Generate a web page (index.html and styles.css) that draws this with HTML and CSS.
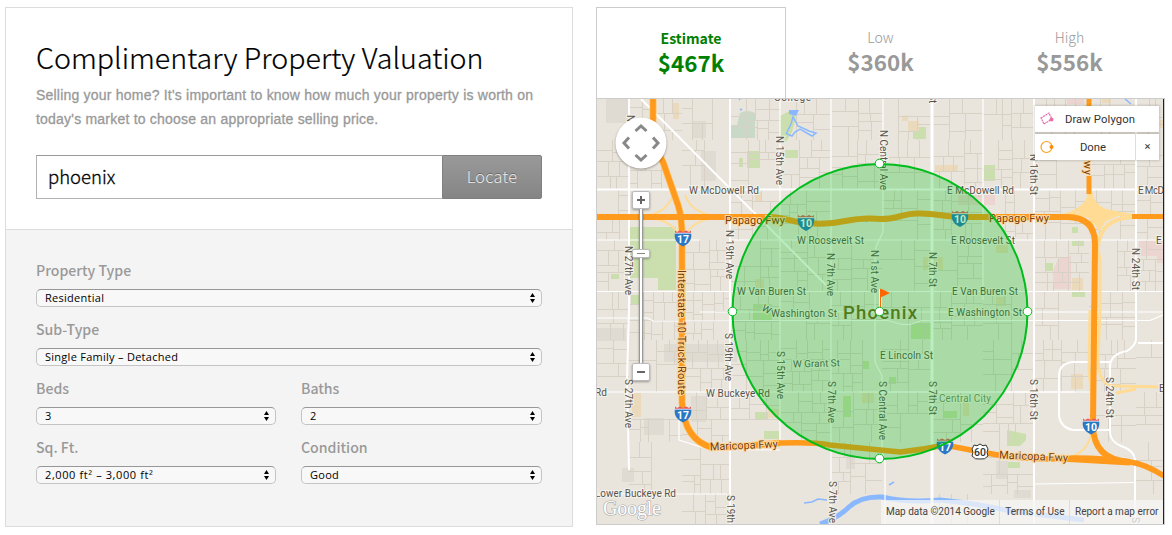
FILE: index.html
```html
<!DOCTYPE html>
<html lang="en">
<head>
    <meta charset="UTF-8">
    <meta name="viewport" content="width=device-width, initial-scale=1.0">
    <title>Complimentary Property Valuation</title>
    <link rel="stylesheet" href="styles.css">
</head>
<body>
    <div class="container">
        <form class="panel" id="valuationForm">
            <div class="panel-top">
                <h1>Complimentary Property Valuation</h1>
                <p class="intro">Selling your home? It's important to know how much your property is worth on<br>today's market to choose an appropriate selling price.</p>
                <div class="search">
                    <input type="text" id="location" name="location" value="phoenix">
                    <button type="submit">Locate</button>
                </div>
            </div>
            <div class="panel-fields">
                <div class="field wide">
                    <label for="type">Property Type</label>
                    <div class="select">
                        <select id="type" name="type"><option>Residential</option></select>
                        <svg width="5" height="10" viewBox="0 0 5 10"><path d="M2.5 0L5 4H0zM0 6h5L2.5 10z"/></svg>
                    </div>
                </div>
                <div class="field wide">
                    <label for="subtype">Sub-Type</label>
                    <div class="select">
                        <select id="subtype" name="subtype"><option>Single Family – Detached</option></select>
                        <svg width="5" height="10" viewBox="0 0 5 10"><path d="M2.5 0L5 4H0zM0 6h5L2.5 10z"/></svg>
                    </div>
                </div>
                <div class="field">
                    <label for="beds">Beds</label>
                    <div class="select">
                        <select id="beds" name="beds"><option>3</option></select>
                        <svg width="5" height="10" viewBox="0 0 5 10"><path d="M2.5 0L5 4H0zM0 6h5L2.5 10z"/></svg>
                    </div>
                </div>
                <div class="field">
                    <label for="baths">Baths</label>
                    <div class="select">
                        <select id="baths" name="baths"><option>2</option></select>
                        <svg width="5" height="10" viewBox="0 0 5 10"><path d="M2.5 0L5 4H0zM0 6h5L2.5 10z"/></svg>
                    </div>
                </div>
                <div class="field">
                    <label for="sqft">Sq. Ft.</label>
                    <div class="select">
                        <select id="sqft" name="sqft" class="sqft"><option>2,000 ft² – 3,000 ft²</option></select>
                        <svg width="5" height="10" viewBox="0 0 5 10"><path d="M2.5 0L5 4H0zM0 6h5L2.5 10z"/></svg>
                    </div>
                </div>
                <div class="field">
                    <label for="condition">Condition</label>
                    <div class="select">
                        <select id="condition" name="condition"><option>Good</option></select>
                        <svg width="5" height="10" viewBox="0 0 5 10"><path d="M2.5 0L5 4H0zM0 6h5L2.5 10z"/></svg>
                    </div>
                </div>
            </div>
        </form>

        <div class="results">
            <div class="tabs">
                <div class="tab active"><span>Estimate</span><b>$467k</b></div>
                <div class="tab"><span>Low</span><b>$360k</b></div>
                <div class="tab"><span>High</span><b>$556k</b></div>
            </div>
            <div class="map">
                <svg class="map-canvas" width="567" height="425" viewBox="597 99 567 425">
                    <defs>
                        <g id="interstate">
                            <path d="M-8-5C-9-1-8 5 0 8.500 8 5 9-1 8-5z" fill="#2a78c4"/>
                            <path d="M-8-7.500l2 1.500 3-1.500 3 1.500 3-1.500 3 1.500 2-1.500v2.500H-8z" fill="#e0575b"/>
                            <path d="M-8-4.800H8" stroke="#fff" stroke-width=".8"/>
                        </g>
                    </defs>
                    <rect x="597" y="99" width="567" height="425" fill="#e9e5dc"/>

                    <!-- built-up areas -->
                    <g fill="#dfdad2">
                        <path d="M606 99h22v24h-22zM692 121h14v17h-14zM701 151h15v30h-15zM597 328h29v13H597zM664 344h73v18h-73zM691 396h15v26h-15zM644 418h20v17h-20zM846 455h9v14h-9zM996 461h12v18h-12zM1014 490h17v8h-17zM622 468h12v14h-12z"/>
                    </g>
                    <!-- parks, schools, hospitals -->
                    <path fill="#cbdfae" d="M629 227h47v63h-18v-12h-29zM739 158h4v9h-4zM747 151h13v17h-13zM611 274h8v5h-8zM631 295h8v9h-8zM913 127h13v12h-13zM984 165h11v16h-11zM753 304h19v17h-19zM755 412h13v7h-13zM764 431h15v8h-15zM780 116l11-6 5 8-4 14-6 10h-6zM1072 227h6v6h-6zM1072 241h12v5h-12zM1046 263h7v8h-7zM1072 292h13v5h-13zM1007 430l19 4v6l-6 6h-13zM1008 462h12v6h-12zM843 396h8v21h-8zM862 361h7v8h-7zM889 377h7v7h-7zM911 323h20v16h-20zM944 411h13v7h-13zM785 150h13v8h-13z"/>
                    <path fill="#c8dac7" d="M740 113q7-4 15 0v25h-24v-13h6z"/>
                    <path fill="#ebd9bb" d="M673 103h6v16h-6zM632 393h9v24h-9zM768 409h11v9h-11zM755 192h6v9h-6zM902 116v5h6v10h11v-10h-11v-6zM935 165h23v7h-23zM1071 374h12v15h-12zM1072 278h11v12h-11zM923 257h20v13h-20zM862 391h12v12h-12zM963 400h6v16h-6zM996 245h12v8h-12zM996 297h10v9h-10zM1102 99h9v4h-9zM1160 120h4v8h-4zM755 279h9v9h-9z"/>
                    <path fill="#ecd4d0" d="M1067 99h17v5h-17zM958 195h37v10h-37zM1053 271l5-12 13-3v33h-18zM1139 241h25v22h-7v-7h-18z"/>

                    <g id="streets" fill="none" stroke="#d7d1c6" stroke-width="1"></g>

                    <!-- canal, pond and river -->
                    <g fill="none" stroke="#8ab8ff">
                        <path d="M786 134l5-10 2-7 5 9 11 5 7 2-4 3-12-7-5 3-3 4-5-2" stroke-width="1.500"/>
                        <path d="M789 110h10l-3 6-7-2z" fill="#8ab8ff" stroke="none"/>
                        <path d="M804 503l8-1 6-3 9 1M739 99l1 1M740 110l2-1M1124 98l7 6M889 485l5-3M866 222l3-3" stroke-width="1.500"/>
                        <path d="M820 524q18-6 29-17 12-11 33-10 25 6 58 3 40 4 70 11 40 5 74 9" stroke-width="5"/>
                    </g>

                    <!-- minor arterials -->
                    <g fill="none" stroke="#fff" stroke-width="1.200">
                        <path d="M597 291.500H1164M597 240H700M730 240H1164M597 392H1090M700 312H1164M597 318h50l6 3h80M730 320.500H888l14 4h8l12-4H1150l14-6M597 494h130M780 99V440M983 99V300M831 99V524M1035 484l100-1.500"/>
                        <path d="M883 99V232l-7 15 -1 10V362l7 14V450l3 12V524M860 392h110M970 392h105"/>
                        <path d="M679 410v30l28 9 73 1"/>
                    </g>
                    <!-- main avenues -->
                    <g fill="none" stroke="#fff" stroke-width="2">
                        <path d="M629 99V310l-2 70 2 90M730 99V524M1034 99V524M597 189.500H1164M641 99l16 16L828 287"/>
                        <path d="M932 99V524" stroke-width="3"/>
                        <path d="M1110 362H1072q-13 2-13 14V416q2 12 14 14h37"/>
                        <path d="M1136 99V340q-1 6-9 11-17 3-17 16V433q1 9 11 13 13 4 14 14v64M1138 343h26"/>
                    </g>

                    <!-- interchanges and freeways -->
                    <g fill="none" stroke="#ffdb94">
                        <path d="M640 217q28-2 35-27M722 217q-30-2-37-22M640 217q33 2 38 18M722 217q-29 2-36 18" stroke-width="2"/>
                        <path d="M1089 194q1 13-25 22M1090 192q3 20 30 22l14 2M1134 217q-34 1-36 30M1065 217q26-4 50-3M1091 194v40M1134 217q-22-5-40-8" stroke-width="4"/>
                        <path d="M1088 203l8 2 8 6 16 4-14 6-7 10-8-12-14-5z" fill="#ffdb94" stroke="none"/>
                        <path d="M1097 240l3 22V310l-2 50M1090 310l-1 60 4 40M1098 360q1 27 18 26l48 1M1136 389l-20 4" stroke-width="3"/>
                        <path d="M1092 425q-1 30-28 33" stroke-width="2"/>
                    </g>
                    <g fill="none" stroke="#ffc46b" stroke-width="7">
                        <path d="M653 99V123Q656 150 663 162L678 205Q682 217 682 238V402Q684 440 712 447.500L745 446 780 443"/>
                    </g>
                    <g fill="none" stroke="#ff9a1c">
                        <path d="M653 99V123Q656 150 663 162L678 205Q682 217 682 238V402Q684 440 712 447.500L745 446 780 443Q815 442 830 445L900 452Q922 450 945 445L981 452Q1015 459 1050 459Q1090 456 1130 462Q1145 464 1164 476" stroke-width="5.500"/>
                        <path d="M597 217H770C785 217 790 222 806 223 840 226 845 218 870 218.500 900 221 900 213 918 213.500 935 213 945 217 960 217H1067Q1095 217 1095 244L1093 425Q1093 460 1130 462" stroke-width="6"/>
                        <path d="M1089 176V194M1089 99V120M1132 216.500h32M1060 459l70 4" stroke-width="5"/>
                    </g>

                    <!-- street names -->
                    <g class="names">
                        <text x="689" y="193.500" textLength="70">W McDowell Rd</text>
                        <text x="947" y="193.500" textLength="67">E McDowell Rd</text>
                        <text x="1138" y="193.500" textLength="26">E McD</text>
                        <text x="797" y="244" textLength="67">W Roosevelt St</text>
                        <text x="951" y="244" textLength="64">E Roosevelt St</text>
                        <text x="1156" y="244">E</text>
                        <text x="737" y="294.500" textLength="69">W Van Buren St</text>
                        <text x="952" y="294.500" textLength="66">E Van Buren St</text>
                        <text x="771" y="316.500" textLength="66">Washington St</text>
                        <text x="761" y="310" transform="rotate(30 761 310)">W</text>
                        <text x="948" y="316" textLength="74">E Washington St</text>
                        <text x="793" y="367.500" textLength="47" transform="rotate(-1.500 793 367)">W Grant St</text>
                        <text x="880" y="358.500" textLength="53">E Lincoln St</text>
                        <text x="706" y="396.500" textLength="64">W Buckeye Rd</text>
                        <text x="595" y="396">Rd</text>
                        <text x="939" y="402" textLength="52" class="city">Central City</text>
                        <text x="595" y="497" textLength="81">Lower Buckeye Rd</text>
                        <text x="774" y="101" textLength="37">College</text>
                        <text x="1159" y="392">E</text>
                        <text transform="translate(625 246) rotate(90)" textLength="49">N 27th Ave</text>
                        <text transform="translate(627 115) rotate(90)">N</text>
                        <text transform="translate(625 379) rotate(90)" textLength="49">S 27th Ave</text>
                        <text transform="translate(726 230) rotate(90)" textLength="49">N 19th Ave</text>
                        <text transform="translate(725 333) rotate(90)" textLength="48">S 19th Ave</text>
                        <text transform="translate(727 495) rotate(90)" textLength="28">S 19th</text>
                        <text transform="translate(776 136) rotate(90)" textLength="49">N 15th Ave</text>
                        <text transform="translate(777 351) rotate(90)" textLength="48">S 15th Ave</text>
                        <text transform="translate(827 253) rotate(90)" textLength="43">N 7th Ave</text>
                        <text transform="translate(828 381) rotate(90)" textLength="42">S 7th Ave</text>
                        <text transform="translate(829 481) rotate(90)" textLength="42">S 7th Ave</text>
                        <text transform="translate(880 130) rotate(90)" textLength="60">N Central Ave</text>
                        <text transform="translate(871 250) rotate(90)" textLength="43">N 1st Ave</text>
                        <text transform="translate(879 381) rotate(90)" textLength="59">S Central Ave</text>
                        <text transform="translate(929 252) rotate(90)" textLength="35">N 7th St</text>
                        <text transform="translate(929 381) rotate(90)" textLength="34">S 7th St</text>
                        <text transform="translate(929 94) rotate(90)">St</text>
                        <text transform="translate(1030 154) rotate(90)" textLength="41">N 16th St</text>
                        <text transform="translate(1030 379) rotate(90)" textLength="41">S 16th St</text>
                        <text transform="translate(1132 248) rotate(90)" textLength="42">N 24th St</text>
                        <text transform="translate(1106 377) rotate(90)" textLength="41">S 24th St</text>
                        <text transform="translate(1132 517) rotate(90)">S</text>
                    </g>
                    <g class="names fwy">
                        <text x="725" y="224" textLength="60">Papago Fwy</text>
                        <text x="989" y="221.500" textLength="60">Papago Fwy</text>
                        <text x="710" y="450.500" textLength="68" transform="rotate(-2.500 710 450)">Maricopa Fwy</text>
                        <text x="999" y="458.500" textLength="69" transform="rotate(2.500 999 458)">Maricopa Fwy</text>
                        <text transform="translate(678 270) rotate(90)" textLength="125">Interstate 10 Truck Route</text>
                        <text transform="translate(1084 154) rotate(90)" textLength="21">Fwy</text>
                    </g>
                    <g class="shields">
                        <use href="#interstate" x="683" y="238"/><text x="683" y="242.500">17</text>
                        <use href="#interstate" x="683" y="414"/><text x="683" y="418.500">17</text>
                        <use href="#interstate" x="806" y="222.500"/><text x="806" y="227">10</text>
                        <use href="#interstate" x="960" y="218.500"/><text x="960" y="223">10</text>
                        <use href="#interstate" x="945" y="446"/><text x="945" y="450.500">17</text>
                        <use href="#interstate" x="1091" y="426"/><text x="1091" y="430.500">10</text>
                        <path d="M974 445q3 2 6-1 3 3 6 1l2 4q-2 3 0 7-3 4-8 3-5 1-8-3 2-4 0-7z" fill="#fff" stroke="#333"/>
                        <text x="980" y="456" class="us">60</text>
                    </g>
                    <text x="843" y="319" class="town" textLength="74">Phoenix</text>
                    <text x="603" y="515" class="logo" textLength="58">Google</text>

                    <!-- search area -->
                    <circle cx="880" cy="311.500" r="147.500" fill="#00bc14" fill-opacity=".27" stroke="#00bc1c" stroke-width="2"/>
                    <path d="M880.500 289V310" stroke="#fff" stroke-width="3"/>
                    <path d="M880.500 289V310" stroke="#f60" stroke-width="1.300"/>
                    <path d="M880.500 288.500l9.500 4.500-9.500 4.500z" fill="#f60"/>
                    <g fill="#fff" stroke="#00bc1c">
                        <circle cx="879.500" cy="163.500" r="4.300"/>
                        <circle cx="879.500" cy="311.500" r="4.300"/>
                        <circle cx="879.500" cy="458.500" r="4.300"/>
                        <circle cx="732.500" cy="311.500" r="4.300"/>
                        <circle cx="1027.500" cy="311.500" r="4.300"/>
                    </g>

                    <!-- pan and zoom controls -->
                    <g class="controls">
                        <circle cx="641" cy="143" r="25.500" fill="#fff"/>
                        <path d="M635.500 131l5.500-5 5.500 5M635.500 155l5.500 5 5.500-5M629 137.500l-5 5.500 5 5.500M653 137.500l5 5.500-5 5.500" fill="none" stroke="#888" stroke-width="3"/>
                        <path d="M641 208V364" stroke="#999" stroke-width="4"/>
                        <path d="M641 208V364" stroke="#fff" stroke-width="2"/>
                        <rect x="632.500" y="191.500" width="17" height="17" rx="1.500"/>
                        <path d="M637 200h8M641 196v8" stroke="#666" stroke-width="2"/>
                        <rect x="632.500" y="249.500" width="17" height="8" rx="1.500"/>
                        <path d="M637 253.500h8" stroke="#888"/>
                        <rect x="632.500" y="363.500" width="17" height="17" rx="1.500"/>
                        <path d="M637 372h8" stroke="#666" stroke-width="2"/>
                    </g>
                    <path d="M1163.500 99V524" stroke="#222"/>
                </svg>

                <div class="tools">
                    <div class="tool">
                        <svg width="14" height="14" viewBox="0 0 14 14"><path d="M1 6l8-5 3 6-8 5z" fill="none" stroke="#e772ab" stroke-width="1.200" stroke-dasharray="2 .6"/><circle cx="11.500" cy="7.500" r="2" fill="#e772ab"/></svg>
                        <span class="polygon">Draw Polygon</span>
                    </div>
                    <div class="tool">
                        <svg width="14" height="14" viewBox="0 0 14 14"><circle cx="6.500" cy="7" r="5.500" fill="none" stroke="#f9a01f" stroke-width="1.200"/><circle cx="11.500" cy="7" r="2" fill="#ff8c0a"/></svg>
                        <span class="done">Done</span>
                        <i>×</i>
                    </div>
                </div>
                <div class="credits">
                    <span>Map data ©2014 Google</span><span>Terms of Use</span><span>Report a map error</span>
                </div>
            </div>
        </div>
    </div>

    <script>
        // Residential streets: split every block between the avenues into smaller ones
        let seed = 11;
        function rnd() {
            seed = (seed * 16807) % 2147483647;
            return seed / 2147483647;
        }
        let d = "";
        function split(x, y, w, h) {
            if ((w < 19 && h < 19) || rnd() < 0.13) {
                return;
            }
            let t = 0.3 + rnd() * 0.4;
            if (w / h > 0.75 + rnd() * 0.5) {
                let a = Math.round(w * t);
                d += `M${x + a + 0.5} ${y}v${h}`;
                split(x, y, a, h);
                split(x + a, y, w - a, h);
            } else {
                let a = Math.round(h * t);
                d += `M${x} ${y + a + 0.5}h${w}`;
                split(x, y, w, a);
                split(x, y + a, w, h - a);
            }
        }
        let xs = [597, 629, 682, 730, 780, 831, 882, 932, 983, 1034, 1089, 1136, 1164];
        let ys = [99, 140, 189, 240, 291, 340, 392, 442, 494, 524];
        for (let i = 0; i < xs.length - 1; i++) {
            for (let j = 0; j < ys.length - 1; j++) {
                // few streets in the industrial south and in the park
                if ((j > 6 && rnd() < 0.6) || (i == 1 && (j == 3 || j == 2))) {
                    continue;
                }
                split(xs[i], ys[j], xs[i + 1] - xs[i], ys[j + 1] - ys[j]);
            }
        }
        let path = document.createElementNS("http://www.w3.org/2000/svg", "path");
        path.setAttribute("d", d);
        document.getElementById("streets").appendChild(path);

        document.getElementById("valuationForm").addEventListener("submit", function(event) {
            event.preventDefault();
        });
    </script>
</body>
</html>
```
FILE: styles.css
```css
* {
    box-sizing: border-box;
}
body {
    font-family: "Noto Sans CJK SC", "Noto Sans", sans-serif;
    margin: 0;
    padding: 7px 0 0 5px;
    background-color: #fff;
    overflow: hidden;
}
.container {
    display: flex;
    gap: 23px;
}
.panel {
    width: 568px;
    height: 520px;
    border: 1px solid #dcdcdc;
    background-color: #f4f4f4;
}
.panel-top {
    height: 222px;
    padding: 27px 30px 0;
    background-color: #fff;
    border-bottom: 1px solid #dcdcdc;
}
h1 {
    margin: 0;
    font-size: 28.6px;
    font-weight: 300;
    line-height: 44px;
    color: #000;
    white-space: nowrap;
    -webkit-text-stroke: 0.2px #000;
}
.intro {
    margin: 4px 0 0;
    font-family: "Liberation Sans", Arial, sans-serif;
    font-size: 14px;
    letter-spacing: 0.21px;
    line-height: 24px;
    color: #999;
    white-space: nowrap;
    -webkit-text-stroke: 0.3px #999;
}
.search {
    display: flex;
    height: 44px;
    margin-top: 24px;
}
.search input {
    width: 406px;
    padding: 0 11px 3px;
    border: 1px solid #b2b2b2;
    border-top-color: #999;
    border-right: none;
    font-family: inherit;
    font-size: 18.5px;
    font-weight: 300;
    color: #000;
    -webkit-text-stroke: 0.3px #000;
}
.search button {
    width: 100px;
    padding: 0 0 2px;
    border: 1px solid #808080;
    border-radius: 0 2px 2px 0;
    background: linear-gradient(#999, #858585);
    font-family: inherit;
    font-size: 16.3px;
    font-weight: 300;
    letter-spacing: 0.3px;
    color: #eee;
    text-shadow: 0 -1px 0 #666;
}
.panel-fields {
    display: grid;
    grid-template-columns: 240px 241px;
    column-gap: 25px;
    grid-auto-rows: 59px;
    padding: 28px 30px 0;
}
.field.wide {
    grid-column: span 2;
}
label {
    display: block;
    height: 31px;
    font-size: 14.1px;
    font-weight: 500;
    line-height: 24px;
    color: #999;
}
.select {
    position: relative;
    height: 18px;
}
.select select {
    display: block;
    width: 100%;
    height: 18px;
    padding: 0 8px;
    appearance: none;
    border: 1px solid #c4c4c4;
    border-top-color: #979797;
    border-radius: 5px;
    background-color: #f8f8f8;
    font-family: "Open Sans", sans-serif;
    font-size: 11px;
    letter-spacing: 0.27px;
    line-height: 16px;
    color: #000;
}
.select .sqft {
    letter-spacing: 0.6px;
}
.select svg {
    position: absolute;
    top: 4px;
    right: 7px;
}
.tabs {
    display: flex;
    width: 568px;
    height: 91px;
}
.tab {
    width: 189px;
    padding-top: 19px;
    color: #999;
    text-align: center;
}
.tab.active {
    width: 190px;
    border: 1px solid #ccc;
    border-bottom: none;
    color: #008000;
}
.tab span {
    display: block;
    font-size: 14.1px;
    font-weight: 300;
    line-height: 22px;
}
.tab.active span {
    font-weight: 700;
}
.tab b {
    display: block;
    font-size: 22.4px;
    line-height: 27px;
}
.map {
    position: relative;
    width: 569px;
    height: 427px;
    border: 1px solid #ccc;
}
.map-canvas {
    display: block;
}
.names {
    font-family: Roboto, sans-serif;
    font-size: 10px;
    fill: #57534d;
    stroke: #f4f1ea;
    stroke-width: 2px;
    paint-order: stroke;
}
.names .city {
    fill: #7a8466;
}
.fwy {
    font-size: 11px;
    fill: #743c08;
    stroke: #ffd9a0;
}
.shields {
    font-family: Roboto, sans-serif;
    font-size: 10.5px;
    font-weight: 700;
    text-anchor: middle;
    fill: #fff;
}
.shields .us {
    font-weight: 500;
    fill: #333;
}
.town {
    font-family: Roboto, sans-serif;
    font-size: 18.5px;
    font-weight: 500;
    fill: #6f6420;
}
.logo {
    font-family: "Liberation Serif", serif;
    font-size: 20px;
    fill: #fff;
    stroke: #aaa;
    stroke-width: 1.2px;
    paint-order: stroke;
}
.controls {
    filter: drop-shadow(0 1px 1px rgba(0, 0, 0, 0.35));
}
.controls rect {
    fill: #fff;
    stroke: #bbb;
}
.tools {
    position: absolute;
    top: 7px;
    right: 5px;
    width: 124px;
}
.tool {
    display: flex;
    align-items: center;
    height: 26px;
    margin-bottom: 2px;
    padding-left: 5px;
    background-color: #fff;
    box-shadow: 0 0 2px 1px rgba(0, 0, 0, 0.15);
    font-family: Roboto, sans-serif;
    font-size: 11.3px;
    color: #333;
}
.tool span {
    flex: 1;
    text-align: center;
}
.tool .polygon {
    padding-right: 13px;
    letter-spacing: 0.1px;
}
.tool .done {
    padding-right: 3px;
}
.tool i {
    width: 24px;
    border-left: 1px solid #ddd;
    font-style: normal;
    line-height: 26px;
    text-align: center;
}
.credits {
    position: absolute;
    right: 1px;
    bottom: 0;
    display: flex;
    height: 24px;
    background-color: rgba(245, 245, 245, 0.75);
    font-family: Roboto, sans-serif;
    font-size: 10px;
    line-height: 24px;
    color: #444;
}
.credits span {
    padding: 0 4.500px 0 5px;
}
.credits span + span {
    border-left: 1px solid #ddd;
}
```
